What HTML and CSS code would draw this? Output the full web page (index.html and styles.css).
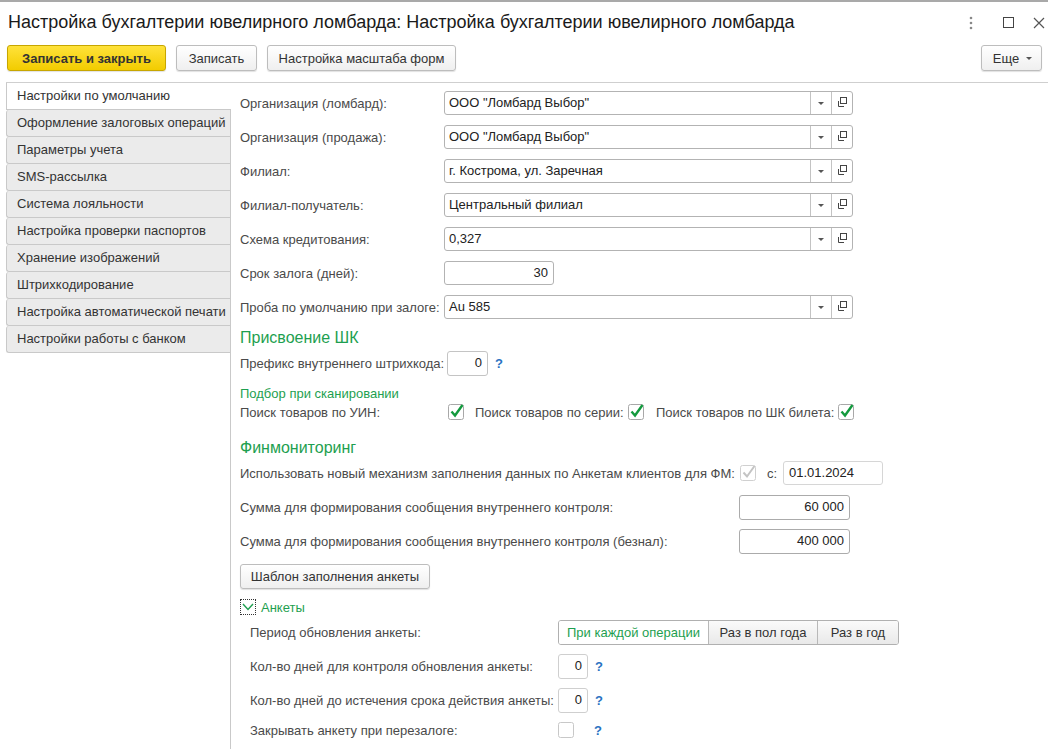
FILE: index.html
```html
<!DOCTYPE html>
<html lang="ru">
<head>
<meta charset="utf-8">
<title>Настройка бухгалтерии ювелирного ломбарда</title>
<link rel="stylesheet" href="styles.css">
</head>
<body>
<div class="window">
  <header class="titlebar">
    <h1 class="title">Настройка бухгалтерии ювелирного ломбарда: Настройка бухгалтерии ювелирного ломбарда</h1>
    <div class="winctl">
      <svg class="ic-more" width="4" height="14" viewBox="0 0 4 14"><circle cx="2" cy="2" r="1.3" fill="#888"/><circle cx="2" cy="7" r="1.3" fill="#888"/><circle cx="2" cy="12" r="1.3" fill="#888"/></svg>
      <svg class="ic-max" width="11" height="11" viewBox="0 0 11 11"><rect x="0.5" y="0.5" width="10" height="10" fill="none" stroke="#444" stroke-width="1"/></svg>
      <svg class="ic-close" width="12" height="12" viewBox="0 0 12 12"><path d="M1 1 L11 11 M11 1 L1 11" stroke="#555" stroke-width="1.2" fill="none"/></svg>
    </div>
  </header>

  <div class="toolbar">
    <button class="btn btn-primary btn-save-close">Записать и закрыть</button>
    <button class="btn btn-save">Записать</button>
    <button class="btn btn-scale">Настройка масштаба форм</button>
    <span class="spacer"></span>
    <button class="btn btn-more">Еще <span class="tri"></span></button>
  </div>

  <div class="workarea">
    <nav class="tabs">
      <div class="tab active">Настройки по умолчанию</div>
      <div class="tab">Оформление залоговых операций</div>
      <div class="tab">Параметры учета</div>
      <div class="tab">SMS-рассылка</div>
      <div class="tab">Система лояльности</div>
      <div class="tab">Настройка проверки паспортов</div>
      <div class="tab">Хранение изображений</div>
      <div class="tab">Штрихкодирование</div>
      <div class="tab">Настройка автоматической печати</div>
      <div class="tab">Настройки работы с банком</div>
    </nav>

    <section class="page">
      <div class="row first">
        <span class="lbl">Организация (ломбард):</span>
        <div class="ref"><span class="ref-val">ООО "Ломбард Выбор"</span><span class="ref-dd"><span class="tri"></span></span><span class="ref-open"><svg width="11" height="11" viewBox="0 0 11 11"><rect x="3.5" y="0.5" width="6" height="6" fill="none" stroke="#444"/><path d="M1.5 4 V9.5 H7" fill="none" stroke="#444"/></svg></span></div>
      </div>
      <div class="row">
        <span class="lbl">Организация (продажа):</span>
        <div class="ref"><span class="ref-val">ООО "Ломбард Выбор"</span><span class="ref-dd"><span class="tri"></span></span><span class="ref-open"><svg width="11" height="11" viewBox="0 0 11 11"><rect x="3.5" y="0.5" width="6" height="6" fill="none" stroke="#444"/><path d="M1.5 4 V9.5 H7" fill="none" stroke="#444"/></svg></span></div>
      </div>
      <div class="row">
        <span class="lbl">Филиал:</span>
        <div class="ref"><span class="ref-val">г. Кострома, ул. Заречная</span><span class="ref-dd"><span class="tri"></span></span><span class="ref-open"><svg width="11" height="11" viewBox="0 0 11 11"><rect x="3.5" y="0.5" width="6" height="6" fill="none" stroke="#444"/><path d="M1.5 4 V9.5 H7" fill="none" stroke="#444"/></svg></span></div>
      </div>
      <div class="row">
        <span class="lbl">Филиал-получатель:</span>
        <div class="ref"><span class="ref-val">Центральный филиал</span><span class="ref-dd"><span class="tri"></span></span><span class="ref-open"><svg width="11" height="11" viewBox="0 0 11 11"><rect x="3.5" y="0.5" width="6" height="6" fill="none" stroke="#444"/><path d="M1.5 4 V9.5 H7" fill="none" stroke="#444"/></svg></span></div>
      </div>
      <div class="row">
        <span class="lbl">Схема кредитования:</span>
        <div class="ref"><span class="ref-val">0,327</span><span class="ref-dd"><span class="tri"></span></span><span class="ref-open"><svg width="11" height="11" viewBox="0 0 11 11"><rect x="3.5" y="0.5" width="6" height="6" fill="none" stroke="#444"/><path d="M1.5 4 V9.5 H7" fill="none" stroke="#444"/></svg></span></div>
      </div>
      <div class="row">
        <span class="lbl">Срок залога (дней):</span>
        <div class="inp num w110">30</div>
      </div>
      <div class="row">
        <span class="lbl">Проба по умолчанию при залоге:</span>
        <div class="ref"><span class="ref-val">Au 585</span><span class="ref-dd"><span class="tri"></span></span><span class="ref-open"><svg width="11" height="11" viewBox="0 0 11 11"><rect x="3.5" y="0.5" width="6" height="6" fill="none" stroke="#444"/><path d="M1.5 4 V9.5 H7" fill="none" stroke="#444"/></svg></span></div>
      </div>

      <h2 class="group h-shk">Присвоение ШК</h2>
      <div class="row row-prefix">
        <span class="lbl lbl-prefix">Префикс внутреннего штрихкода:</span>
        <div class="inp num w41">0</div>
        <span class="help">?</span>
      </div>

      <h3 class="subgroup">Подбор при сканировании</h3>
      <div class="row row-checks">
        <span class="lbl lbl-uin">Поиск товаров по УИН:</span>
        <svg class="chk" width="17" height="17" viewBox="0 0 17 17"><rect x="0.5" y="1.5" width="15" height="15" rx="2" fill="#fff" stroke="#a8a8a8"/><path d="M3.5 8.5 L7 12.5 L14.5 2" fill="none" stroke="#139a3e" stroke-width="2.4"/></svg>
        <span class="lbl lbl-series">Поиск товаров по серии:</span>
        <svg class="chk" width="17" height="17" viewBox="0 0 17 17"><rect x="0.5" y="1.5" width="15" height="15" rx="2" fill="#fff" stroke="#a8a8a8"/><path d="M3.5 8.5 L7 12.5 L14.5 2" fill="none" stroke="#139a3e" stroke-width="2.4"/></svg>
        <span class="lbl lbl-ticket">Поиск товаров по ШК билета:</span>
        <svg class="chk" width="17" height="17" viewBox="0 0 17 17"><rect x="0.5" y="1.5" width="15" height="15" rx="2" fill="#fff" stroke="#a8a8a8"/><path d="M3.5 8.5 L7 12.5 L14.5 2" fill="none" stroke="#139a3e" stroke-width="2.4"/></svg>
      </div>

      <h2 class="group h-fm">Финмониторинг</h2>
      <div class="row row-fm">
        <span class="lbl lbl-fm">Использовать новый механизм заполнения данных по Анкетам клиентов для ФМ:</span>
        <svg class="chk" width="17" height="17" viewBox="0 0 17 17"><rect x="0.5" y="1.5" width="15" height="15" rx="2" fill="#fff" stroke="#d0d0d0"/><path d="M3.5 8.5 L7 12.5 L14.5 2" fill="none" stroke="#c4c4c4" stroke-width="2"/></svg>
        <span class="lbl lbl-from">с:</span>
        <div class="inp date">01.01.2024</div>
      </div>
      <div class="row row-sum">
        <span class="lbl lbl-sum">Сумма для формирования сообщения внутреннего контроля:</span>
        <div class="inp num w111">60 000</div>
      </div>
      <div class="row row-sum2">
        <span class="lbl lbl-sum">Сумма для формирования сообщения внутреннего контроля (безнал):</span>
        <div class="inp num w111">400 000</div>
      </div>
      <div class="row row-btn">
        <button class="btn btn-template">Шаблон заполнения анкеты</button>
      </div>

      <div class="collapse-head">
        <span class="chev"><svg width="12" height="8" viewBox="0 0 12 8"><path d="M1 1 L6 6.5 L11 1" fill="none" stroke="#1e9f50" stroke-width="1.4"/></svg></span>
        <span class="collapse-title">Анкеты</span>
      </div>
      <div class="anketa">
        <div class="row row-period">
          <span class="lbl lbl-ank">Период обновления анкеты:</span>
          <div class="seg">
            <span class="seg-item seg-on">При каждой операции</span>
            <span class="seg-item seg-half">Раз в пол года</span>
            <span class="seg-item seg-year">Раз в год</span>
          </div>
        </div>
        <div class="row row-ank">
          <span class="lbl lbl-ank">Кол-во дней для контроля обновления анкеты:</span>
          <div class="inp num w30 light">0</div>
          <span class="help">?</span>
        </div>
        <div class="row row-ank">
          <span class="lbl lbl-ank">Кол-во дней до истечения срока действия анкеты:</span>
          <div class="inp num w30 light">0</div>
          <span class="help">?</span>
        </div>
        <div class="row row-close">
          <span class="lbl lbl-ank">Закрывать анкету при перезалоге:</span>
          <svg class="chk" width="17" height="17" viewBox="0 0 17 17"><rect x="0.5" y="0.5" width="15" height="15" rx="2" fill="#fff" stroke="#c8c8c8"/></svg>
          <span class="help help-chk">?</span>
        </div>
      </div>
    </section>
  </div>
</div>
</body>
</html>
```

FILE: styles.css
```css
* { box-sizing: border-box; }
html, body { margin: 0; padding: 0; background: #fff; }
body {
  font-family: "Liberation Sans", Arial, sans-serif;
  font-size: 13px;
  color: #4a4a4a;
  width: 1048px;
  height: 749px;
  overflow: hidden;
}
.window {
  border-top: 2px solid #a9a9a9;
  height: 749px;
  display: flex;
  flex-direction: column;
}
.titlebar {
  height: 43px;
  display: flex;
  align-items: center;
  padding-left: 8px;
}
.title {
  margin: 0;
  font-size: 18px;
  font-weight: normal;
  color: #1a1a1a;
  flex: 1;
  white-space: nowrap;
  padding-bottom: 2px;
}
.winctl {
  display: flex;
  align-items: center;
  padding-bottom: 2px;
}
.ic-more { margin-right: 30px; }
.ic-max { margin-right: 19px; }
.ic-close { margin-right: 3px; }

.toolbar {
  height: 26px;
  display: flex;
  align-items: stretch;
  padding: 0 6px 0 7px;
  gap: 10px;
}
.spacer { flex: 1; }
.btn {
  font-family: "Liberation Sans", Arial, sans-serif;
  font-size: 13px;
  color: #333;
  height: 26px;
  padding: 0;
  border: 1px solid #bdbdbd;
  border-radius: 3px;
  background: linear-gradient(#ffffff, #efefef);
  box-shadow: 0 1px 1px rgba(0,0,0,0.12);
  cursor: default;
}
.btn-primary {
  background: linear-gradient(#ffe23a, #f2cc00);
  border-color: #c7a600;
  font-weight: bold;
  color: #333;
}
.btn-save-close { width: 159px; }
.btn-save { width: 81px; }
.btn-scale { width: 189px; }
.btn-more {
  width: 61px;
  display: flex;
  align-items: center;
  justify-content: center;
  gap: 7px;
  padding-left: 2px;
}
.tri {
  display: inline-block;
  width: 0;
  height: 0;
  border-left: 3px solid transparent;
  border-right: 3px solid transparent;
  border-top: 3px solid #555;
}

.workarea {
  flex: 1;
  display: flex;
  margin-top: 11px;
  border-top: 1px solid #cfcfcf;
  margin-left: 6px;
}
.tabs {
  width: 225px;
  flex: none;
  border-right: 1px solid #c9c9c9;
  display: flex;
  flex-direction: column;
}
.tab {
  height: 27px;
  line-height: 26px;
  padding-left: 10px;
  color: #333;
  background: #ebebeb;
  border-left: 1px solid #c9c9c9;
  border-bottom: 1px solid #c9c9c9;
  border-radius: 3px 0 0 3px;
  white-space: nowrap;
}
.tab.active {
  background: #fff;
  position: relative;
  margin-right: -1px;
  border-radius: 0;
}
.page {
  flex: 1;
  padding: 8px 0 0 9px;
}

.row {
  display: flex;
  align-items: center;
  height: 24px;
  margin-top: 10px;
}
.row.first { margin-top: 0; }
.lbl { width: 204px; flex: none; white-space: nowrap; }

.ref {
  width: 409px;
  height: 24px;
  display: flex;
  border: 1px solid #b3b3b3;
  border-radius: 3px;
  color: #222;
}
.ref-val {
  flex: 1;
  padding-left: 4px;
  line-height: 22px;
}
.ref-dd, .ref-open {
  width: 21px;
  border-left: 1px solid #c3c3c3;
  display: flex;
  align-items: center;
  justify-content: center;
}
.ref-open svg { margin-top: -2px; }

.inp {
  height: 24px;
  border: 1px solid #b3b3b3;
  border-radius: 3px;
  line-height: 22px;
  color: #222;
  padding: 0 4px;
  flex: none;
}
.inp.num { text-align: right; padding-right: 5px; }
.inp.light { border-color: #cfcfcf; }
.w110 { width: 110px; }
.w41 { width: 41px; }
.w111 { width: 111px; }
.w30 { width: 30px; }

.group {
  margin: 9px 0 0 0;
  font-size: 16px;
  font-weight: normal;
  color: #1e9f50;
  line-height: 20px;
  height: 20px;
}
.h-fm { margin-top: 17px; }
.subgroup {
  margin: 10px 0 0 0;
  font-size: 13px;
  font-weight: normal;
  color: #1e9f50;
  line-height: 15px;
  height: 15px;
}
.row-prefix { margin-top: 3px; height: 25px; }
.lbl-prefix { width: 207px; }
.row-prefix .inp { height: 25px; border-color: #c4c4c4; }
.help {
  color: #2a72c2;
  font-weight: bold;
  margin-left: 7px;
}
.row-checks { margin-top: 2px; height: 18px; }
.lbl-uin { width: 208px; }
.lbl-series { width: 163px; padding-left: 10px; }
.lbl-ticket { width: 193px; padding-left: 11px; }
.chk { flex: none; margin-top: -2px; }

.row-fm { margin-top: 3px; }
.lbl-fm { width: 500px; }
.lbl-from { width: 26px; padding-left: 10px; }
.inp.date {
  width: 100px;
  border-color: #d6d6d6;
  padding-left: 5px;
}
.row-sum { height: 25px; margin-top: 10px; }
.row-sum2 { height: 25px; margin-top: 9px; }
.lbl-sum { width: 499px; }
.row-sum .inp, .row-sum2 .inp { height: 25px; border-color: #ababab; }
.row-btn { height: 25px; margin-top: 10px; }
.btn-template { width: 190px; height: 25px; }

.collapse-head {
  margin-top: 10px;
  height: 16px;
  display: flex;
  align-items: center;
}
.chev {
  width: 16px;
  height: 16px;
  border: 1px dotted #333;
  display: flex;
  align-items: center;
  justify-content: center;
}
.collapse-title {
  color: #1e9f50;
  margin-left: 5px;
}
.anketa { padding-left: 10px; }
.row-period { margin-top: 5px; height: 25px; }
.lbl-ank { width: 308px; }
.seg {
  display: flex;
  height: 25px;
  border: 1px solid #b0b0b0;
  border-radius: 3px;
  overflow: hidden;
}
.seg-item {
  line-height: 23px;
  text-align: center;
  color: #333;
  background: linear-gradient(#fafafa, #e9e9e9);
  border-left: 1px solid #b8b8b8;
}
.seg-on {
  width: 149px;
  background: #fff;
  color: #1e9f50;
  border-left: none;
}
.seg-half { width: 109px; }
.seg-year { width: 81px; }
.row-ank { margin-top: 9px; height: 25px; }
.row-ank .inp { height: 25px; }
.row-close { margin-top: 9px; height: 16px; }
.row-close .chk { margin-top: 0; }
.help.help-chk { margin-left: 19px; }
```
